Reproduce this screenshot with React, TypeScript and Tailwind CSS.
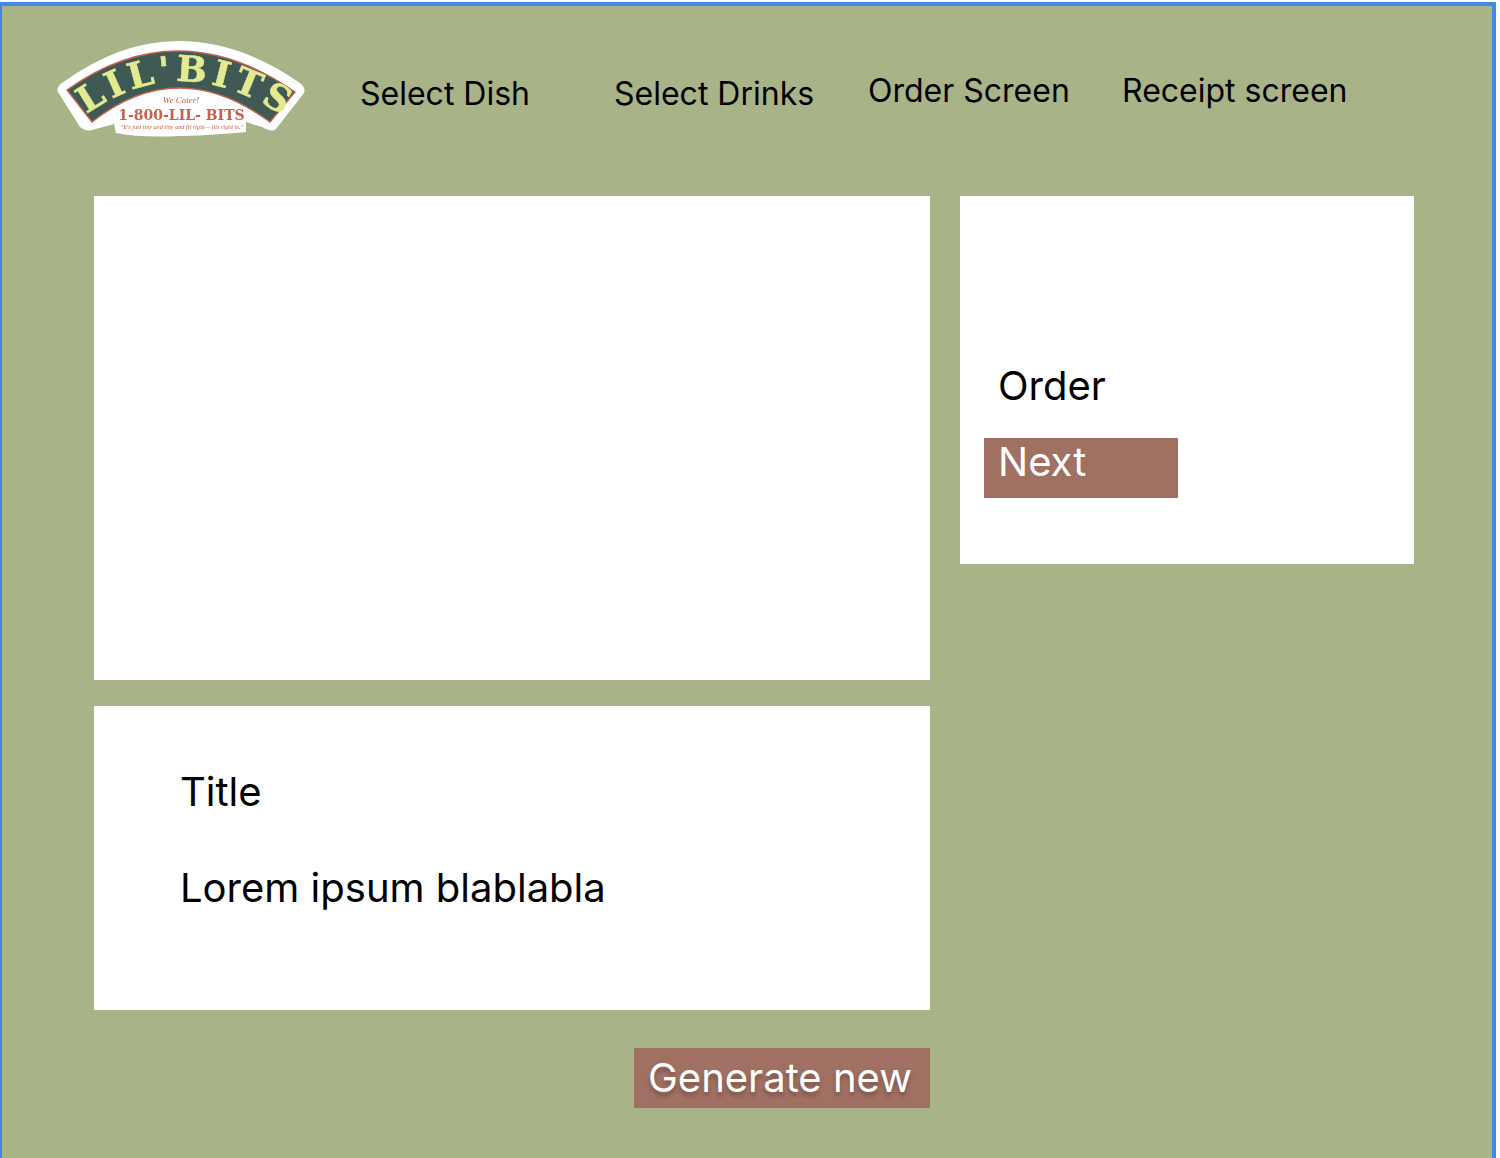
import React from "react";

function Logo() {
  return (
    <svg width="252" height="100" viewBox="56 39 252 100" className="shrink-0 blur-[0.3px]">
      <path
        d="M58,92 Q56,87 62,83 Q120,41 178,41 Q240,41 300,83 Q306,88 304,93 L276,129 Q272,133 262,127 L246,122 L246,132 Q200,136 180,136 Q140,138 116,133 L114,124 L92,130 Q86,132 80,127 Z"
        fill="#ffffff"
      />
      <path
        d="M67,90 Q178,11 295,92 L270,122 Q178,54 92,122 Z"
        fill="#3f5a54"
        stroke="#c9604f"
        strokeWidth="1.5"
      />
      <path id="logoArc" d="M84,116 Q178,48 280,114" fill="none" />
      <text
        fill="#e4ea90"
        stroke="#e4ea90"
        strokeWidth="0.5"
        fontFamily="'DejaVu Serif', serif"
        fontWeight="700"
        fontSize="36"
      >
        <textPath href="#logoArc" startOffset="3" textLength="210" lengthAdjust="spacing">
          LIL'BITS
        </textPath>
      </text>
      <text
        x="181"
        y="103"
        textAnchor="middle"
        fill="#c9604f"
        fontFamily="'Liberation Serif', serif"
        fontStyle="italic"
        fontSize="9"
      >
        We Cater!
      </text>
      <text
        x="181.5"
        y="120"
        textAnchor="middle"
        fill="#c9604f"
        fontFamily="'DejaVu Serif', serif"
        fontWeight="700"
        fontSize="14"
      >
        1-800-LIL- BITS
      </text>
      <text
        x="182"
        y="129"
        textAnchor="middle"
        fill="#c9604f"
        fontFamily="'Liberation Serif', serif"
        fontStyle="italic"
        fontSize="6.2"
      >
        "It's just tiny and tiny and fit right— fits right in."
      </text>
    </svg>
  );
}

const font = "font-['Inter',sans-serif]";

export default function App() {
  return (
    <div className="bg-white h-[1158px] w-[1500px] overflow-hidden pt-[2px]">
      <div
        className={`${font} w-[1496px] h-[1156px] bg-[#a9b388] border-t-4 border-l-2 border-r-4 border-[#4189e4] text-black`}
      >
        <header className="h-[190px] flex items-start">
          <div className="ml-[54px] mt-[33px]">
            <Logo />
          </div>
          <nav className="ml-[52px] flex text-[32px] leading-[39px]">
            <a className="w-[254px] mt-[68px]">Select Dish</a>
            <a className="w-[254px] mt-[68px]">Select Drinks</a>
            <a className="w-[254px] mt-[65px]">Order Screen</a>
            <a className="w-[254px] mt-[65px]">Receipt screen</a>
          </nav>
        </header>
        <main className="ml-[92px] flex items-start gap-[30px] text-[40px] leading-[48px]">
          <div className="w-[836px] flex flex-col">
            <div className="h-[484px] bg-white" />
            <div className="h-[304px] mt-[26px] bg-white pt-[62px] pl-[86px] flex flex-col gap-12">
              <div>Title</div>
              <div>Lorem ipsum blablabla</div>
            </div>
            <div className="mt-[38px] flex justify-end">
              <button className="w-[296px] h-[60px] bg-[#a07062] text-white text-left pl-[14px] [text-shadow:0_4px_4px_rgba(0,0,0,0.25)]">
                Generate new
              </button>
            </div>
          </div>
          <div className="w-[454px] h-[368px] bg-white pt-[166px] pl-[24px]">
            <div className="pl-[14px]">Order</div>
            <button className="block mt-[28px] w-[194px] h-[60px] bg-[#a07062] text-white text-left pl-[14px] pb-[12px]">
              Next
            </button>
          </div>
        </main>
      </div>
    </div>
  );
}
